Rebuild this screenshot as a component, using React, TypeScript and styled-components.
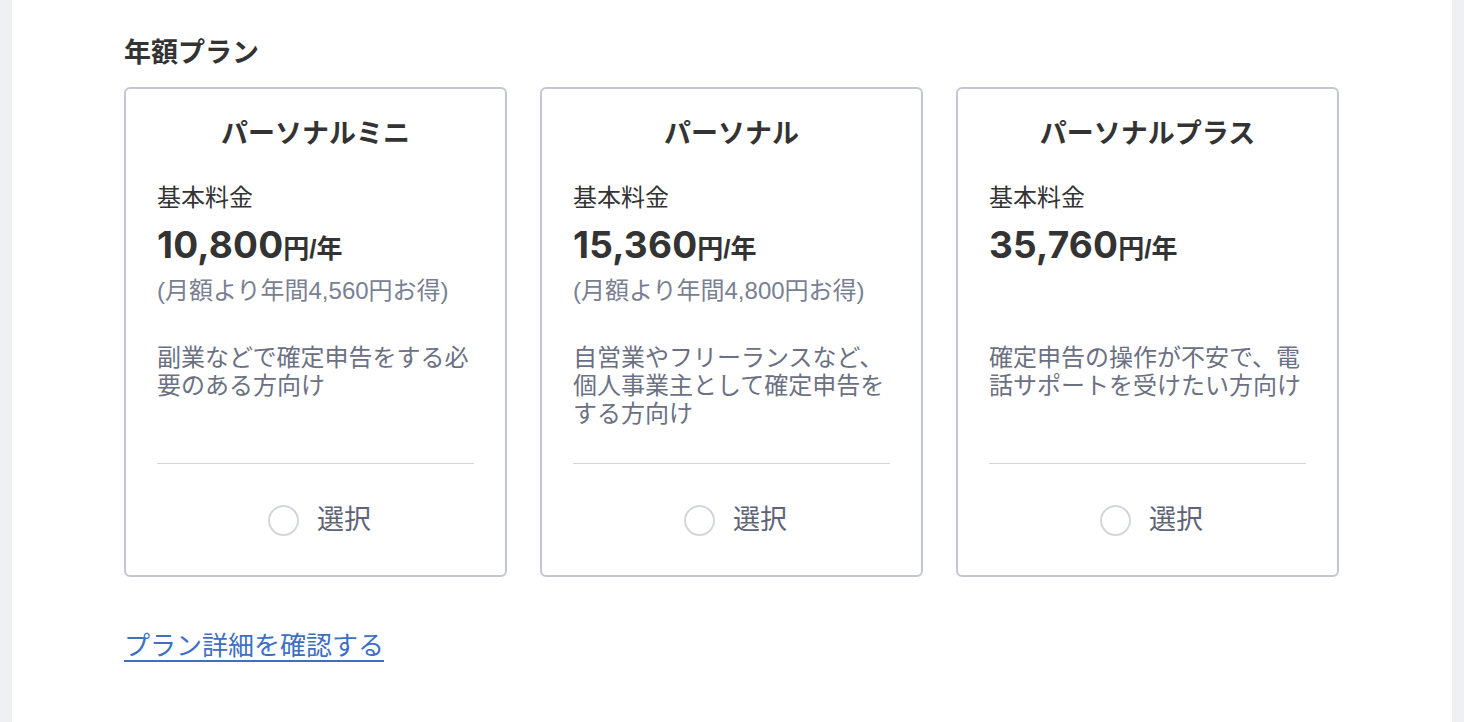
import React from "react";
import styled, { createGlobalStyle } from "styled-components";

const GlobalStyle = createGlobalStyle`
  html, body {
    margin: 0;
    padding: 0;
    background: #eef0f4;
  }
  body {
    font-family: "Liberation Sans", "Noto Sans CJK JP", sans-serif;
    color: #333333;
  }
`;

const Panel = styled.main`
  margin-left: 12px;
  width: 1440px;
  min-height: 722px;
  box-sizing: border-box;
  background: #ffffff;
  padding: 35px 0 40px 112px;
`;

const Heading = styled.h2`
  margin: 0 0 16px;
  font-size: 27px;
  line-height: 36px;
  font-weight: 700;
  color: #333333;
`;

const Grid = styled.div`
  display: grid;
  grid-template-columns: repeat(3, 383px);
  column-gap: 33px;
`;

const Card = styled.section`
  box-sizing: border-box;
  border: 2px solid #c3c5cf;
  border-radius: 6px;
  padding: 27px 31px 37px;
  display: flex;
  flex-direction: column;
`;

const Title = styled.h3`
  margin: 0;
  text-align: center;
  font-size: 27px;
  line-height: 36px;
  font-weight: 700;
  color: #333333;
`;

const Label = styled.div`
  margin-top: 30px;
  font-size: 24px;
  line-height: 32px;
  color: #333333;
`;

const Price = styled.div`
  margin-top: 9px;
  height: 44px;
  display: flex;
  align-items: baseline;
  color: #333333;
  font-weight: 700;
`;

const Amount = styled.span`
  font-family: "Inter", "Liberation Sans", sans-serif;
  font-size: 37px;
  line-height: 44px;
  letter-spacing: 0.2px;
`;

const Unit = styled.span`
  font-size: 26px;
  line-height: 44px;
`;

const Saving = styled.div`
  margin-top: 8px;
  min-height: 32px;
  font-size: 24px;
  line-height: 32px;
  color: #7a8093;
`;

const Description = styled.p`
  margin: 37px 0 35px;
  min-height: 84px;
  font-size: 24px;
  line-height: 28px;
  color: #6b7083;
`;

const Divider = styled.hr`
  margin: 0;
  border: none;
  height: 1px;
  background: #d3d5dc;
`;

const Choice = styled.label`
  margin-top: 38px;
  display: flex;
  align-items: center;
  justify-content: center;
  gap: 18px;
  height: 36px;
  padding-left: 8px;
  cursor: pointer;
`;

const Radio = styled.span`
  box-sizing: border-box;
  width: 31px;
  height: 31px;
  border-radius: 50%;
  border: 2px solid #d4d6dd;
  background: #ffffff;
`;

const ChoiceText = styled.span`
  font-size: 27px;
  line-height: 36px;
  color: #5e6376;
`;

const DetailLink = styled.a`
  display: inline-block;
  margin-top: 51px;
  font-size: 26px;
  line-height: 36px;
  color: #3d6fc6;
  text-decoration: underline;
  text-decoration-thickness: 2px;
  text-underline-offset: 5px;
`;

type Plan = {
  name: string;
  price: string;
  saving?: string;
  description: string;
};

const plans: Plan[] = [
  {
    name: "パーソナルミニ",
    price: "10,800",
    saving: "(月額より年間4,560円お得)",
    description: "副業などで確定申告をする必要のある方向け",
  },
  {
    name: "パーソナル",
    price: "15,360",
    saving: "(月額より年間4,800円お得)",
    description: "自営業やフリーランスなど、個人事業主として確定申告をする方向け",
  },
  {
    name: "パーソナルプラス",
    price: "35,760",
    description: "確定申告の操作が不安で、電話サポートを受けたい方向け",
  },
];

export default function App() {
  return (
    <>
      <GlobalStyle />
      <Panel>
        <Heading>年額プラン</Heading>
        <Grid>
          {plans.map((p) => (
            <Card key={p.name}>
              <Title>{p.name}</Title>
              <Label>基本料金</Label>
              <Price>
                <Amount>{p.price}</Amount>
                <Unit>円/年</Unit>
              </Price>
              <Saving>{p.saving ?? ""}</Saving>
              <Description>{p.description}</Description>
              <Divider />
              <Choice>
                <Radio />
                <ChoiceText>選択</ChoiceText>
              </Choice>
            </Card>
          ))}
        </Grid>
        <DetailLink href="#">プラン詳細を確認する</DetailLink>
      </Panel>
    </>
  );
}
